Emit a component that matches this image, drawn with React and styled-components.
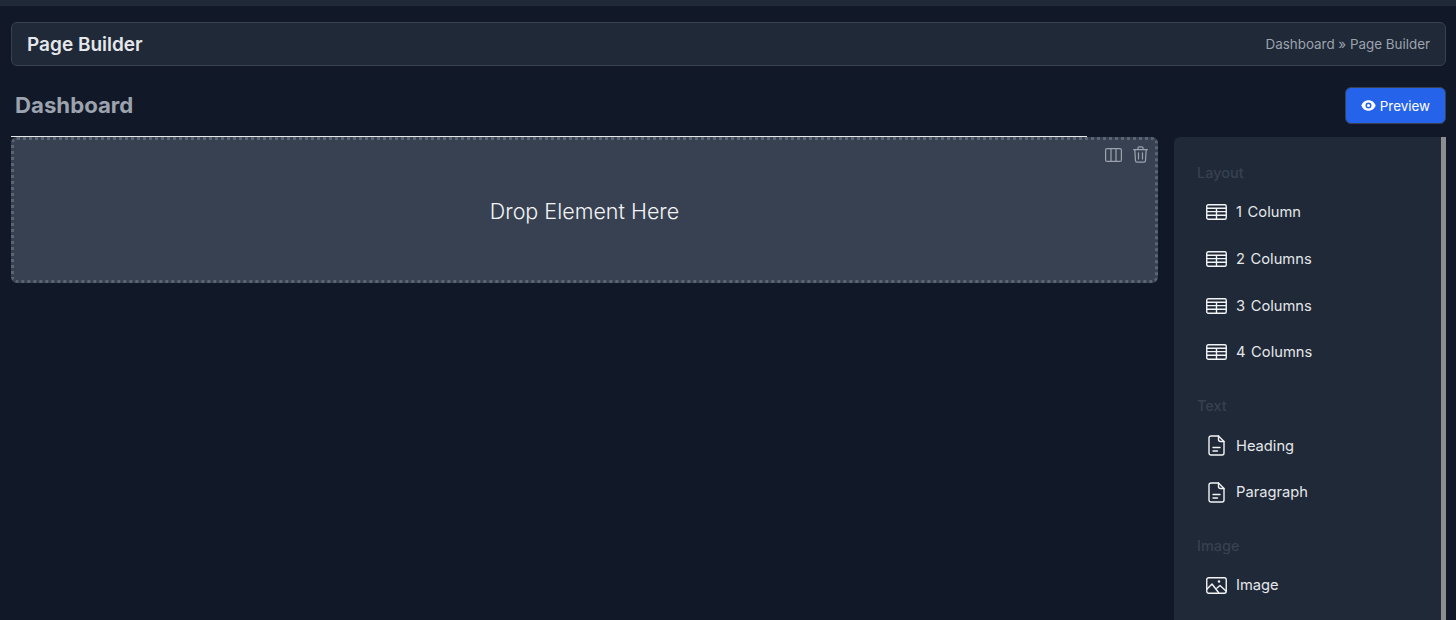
import styled, { createGlobalStyle } from "styled-components";

const COLORS = {
  page: "#111827",
  panel: "#1f2937",
  border: "#374151",
  drop: "#374151",
  muted: "#9ca3af",
  text: "#e5e7eb",
};

const GlobalStyle = createGlobalStyle`
  html, body {
    margin: 0;
    height: 100%;
    overflow: hidden;
    background: ${COLORS.page};
  }
  * {
    box-sizing: border-box;
  }
  #root {
    font-family: "Inter", "Liberation Sans", sans-serif;
  }
`;

const TableIcon = () => (
  <ItemSvg width="21" height="16" viewBox="0 0 21 16">
    <rect x="0.75" y="0.75" width="19.5" height="14.5" rx="1.5" />
    <path d="M1 4.2h19M1 7.6h19M1 11.2h19M10.5 4.2v11" />
  </ItemSvg>
);

const DocIcon = () => (
  <ItemSvg width="17" height="21" viewBox="0 0 17 21">
    <path d="M3 1h7.5L16 6.5V18a2 2 0 0 1-2 2H3a2 2 0 0 1-2-2V3a2 2 0 0 1 2-2z" />
    <path d="M10.5 1v3.5a2 2 0 0 0 2 2H16" />
    <path d="M5 12.5h7M5 16h4.5" />
  </ItemSvg>
);

const ImageIcon = () => (
  <ItemSvg width="21" height="17" viewBox="0 0 21 17">
    <rect x="0.75" y="0.75" width="19.5" height="15.5" rx="2" />
    <path d="M1 12l5-5 6.5 8.5M11 11l3-2.5 6 5.5" />
    <circle cx="13" cy="4.5" r="0.6" />
  </ItemSvg>
);

const ColumnsIcon = () => (
  <ToolSvg width="17" height="14" viewBox="0 0 17 14">
    <rect x="0.6" y="0.6" width="15.8" height="12.8" rx="1.5" />
    <path d="M6 1v12M11 1v12" />
  </ToolSvg>
);

const TrashIcon = () => (
  <ToolSvg width="15" height="17" viewBox="0 0 15 17">
    <path d="M0.6 3.6h13.8M5 3.5V1.8a1 1 0 0 1 1-1h3a1 1 0 0 1 1 1v1.7" />
    <path d="M1.8 3.6l.7 11a1.6 1.6 0 0 0 1.6 1.6h6.8a1.6 1.6 0 0 0 1.6-1.6l.7-11" />
    <path d="M5.5 6.8v6.2M9.5 6.8v6.2" />
  </ToolSvg>
);

const EyeIcon = () => (
  <svg width="15" height="15" viewBox="0 0 20 20" fill="#fff">
    <path d="M10 12a2 2 0 1 0 0-4 2 2 0 0 0 0 4z" />
    <path
      fillRule="evenodd"
      clipRule="evenodd"
      d="M.458 10C1.732 5.943 5.522 3 10 3s8.268 2.943 9.542 7c-1.274 4.057-5.064 7-9.542 7S1.732 14.057.458 10zM14 10a4 4 0 1 1-8 0 4 4 0 0 1 8 0z"
    />
  </svg>
);

const sections = [
  {
    title: "Layout",
    items: [
      { label: "1 Column", icon: <TableIcon /> },
      { label: "2 Columns", icon: <TableIcon /> },
      { label: "3 Columns", icon: <TableIcon /> },
      { label: "4 Columns", icon: <TableIcon /> },
    ],
  },
  {
    title: "Text",
    items: [
      { label: "Heading", icon: <DocIcon /> },
      { label: "Paragraph", icon: <DocIcon /> },
    ],
  },
  {
    title: "Image",
    items: [{ label: "Image", icon: <ImageIcon /> }],
  },
];

function App() {
  return (
    <Page>
      <GlobalStyle />
      <TopStrip />
      <Content>
        <HeaderCard>
          <PageTitle>Page Builder</PageTitle>
          <Breadcrumb>Dashboard » Page Builder</Breadcrumb>
        </HeaderCard>
        <TitleRow>
          <Heading>Dashboard</Heading>
          <PreviewButton>
            <EyeIcon />
            Preview
          </PreviewButton>
        </TitleRow>
        <Rule />
        <Workspace>
          <DropZone>
            <DropTools>
              <ColumnsIcon />
              <TrashIcon />
            </DropTools>
            <DropLabel>Drop Element Here</DropLabel>
          </DropZone>
          <Sidebar>
            {sections.map((section) => (
              <Section key={section.title}>
                <SectionTitle>{section.title}</SectionTitle>
                {section.items.map((item) => (
                  <Item key={item.label}>
                    <IconSlot>{item.icon}</IconSlot>
                    {item.label}
                  </Item>
                ))}
              </Section>
            ))}
          </Sidebar>
        </Workspace>
      </Content>
    </Page>
  );
}

const Page = styled.div`
  height: 620px;
  overflow: hidden;
  background: ${COLORS.page};
`;

const TopStrip = styled.div`
  height: 6px;
  background: ${COLORS.panel};
`;

const Content = styled.div`
  padding: 16px 10px 0 11px;
`;

const HeaderCard = styled.div`
  height: 44px;
  display: flex;
  align-items: center;
  justify-content: space-between;
  padding: 0 15px;
  background: ${COLORS.panel};
  border: 1px solid ${COLORS.border};
  border-radius: 6px;
`;

const PageTitle = styled.h1`
  margin: 0;
  font-size: 19px;
  font-weight: 600;
  color: ${COLORS.text};
`;

const Breadcrumb = styled.span`
  font-size: 13.4px;
  color: ${COLORS.muted};
`;

const TitleRow = styled.div`
  height: 37px;
  margin-top: 21px;
  display: flex;
  align-items: center;
  justify-content: space-between;
  padding-left: 4px;
`;

const Heading = styled.h2`
  margin: 0 0 2px;
  font-size: 22.2px;
  font-weight: 700;
  color: ${COLORS.muted};
`;

const PreviewButton = styled.button`
  width: 101px;
  height: 37px;
  display: flex;
  align-items: center;
  justify-content: flex-end;
  gap: 4px;
  padding: 0 15px 0 0;
  font-family: inherit;
  font-size: 13.4px;
  color: #fff;
  background: #2563eb;
  border: 1px solid ${COLORS.border};
  border-radius: 6px;
`;

const Rule = styled.div`
  width: 1076px;
  height: 1px;
  margin-top: 12px;
  background: ${COLORS.text};
`;

const Workspace = styled.div`
  display: flex;
  align-items: flex-start;
  gap: 16px;
`;

const DropZone = styled.div`
  position: relative;
  width: 1147px;
  height: 146px;
  display: flex;
  align-items: center;
  justify-content: center;
  color: ${COLORS.text};
  background: ${COLORS.drop};
  border: 3px dotted #5b6473;
  border-radius: 6px;
`;

const DropLabel = styled.span`
  margin-top: 2px;
  font-size: 21.5px;
  font-weight: 300;
  color: #f3f4f6;
`;

const DropTools = styled.div`
  position: absolute;
  top: 6px;
  right: 7px;
  display: flex;
  align-items: center;
  gap: 11px;
`;

const ToolSvg = styled.svg`
  fill: none;
  stroke: ${COLORS.muted};
  stroke-width: 1.2;
  stroke-linecap: round;
  stroke-linejoin: round;
`;

const Sidebar = styled.aside`
  width: 272px;
  height: 500px;
  padding: 26px 0 0 23px;
  background: ${COLORS.panel};
  border-right: 5px solid #8b8d91;
  border-radius: 6px 0 0 0;
`;

const Section = styled.section`
  margin-bottom: 20.5px;
`;

const SectionTitle = styled.h3`
  margin: 0 0 7px;
  height: 19px;
  line-height: 19px;
  font-size: 14.5px;
  font-weight: 500;
  color: ${COLORS.border};
`;

const Item = styled.div`
  height: 46.7px;
  display: flex;
  align-items: center;
  gap: 8px;
  padding-left: 8px;
  font-size: 14.7px;
  font-weight: 400;
  word-spacing: 1.5px;
  color: ${COLORS.text};
`;

const IconSlot = styled.span`
  width: 23px;
  display: flex;
  justify-content: center;
`;

const ItemSvg = styled.svg`
  fill: none;
  stroke: #f3f4f6;
  stroke-width: 1.4;
  stroke-linecap: round;
  stroke-linejoin: round;
`;

export default App;
